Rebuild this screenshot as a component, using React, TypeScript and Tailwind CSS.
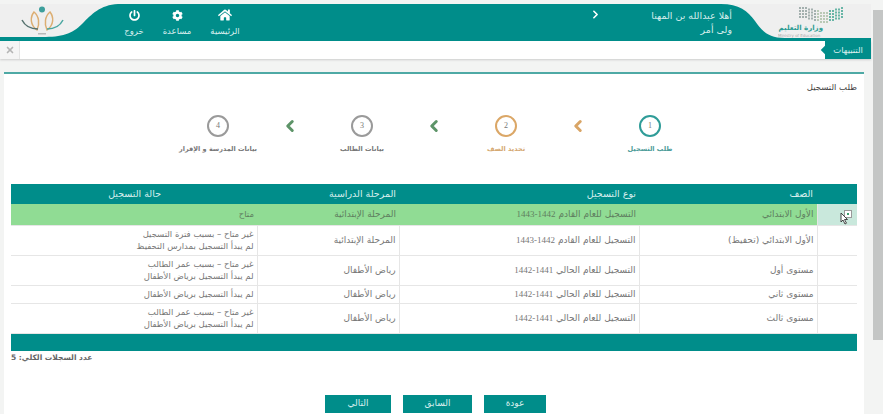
import type { ReactNode } from "react";
import { ChevronLeft, ChevronRight, X } from "lucide-react";
import { FaCog, FaHome, FaPowerOff } from "react-icons/fa";

const rows = [
  { grade: "الأول الابتدائي", type: "التسجيل للعام القادم", year: "1443-1442", stage: "المرحلة الإبتدائية", status: ["متاح"], active: true, h: "h-[21px]" },
  { grade: "الأول الابتدائي (تحفيظ)", type: "التسجيل للعام القادم", year: "1443-1442", stage: "المرحلة الإبتدائية", status: ["غير متاح – بسبب فترة التسجيل", "لم يبدأ التسجيل بمدارس التحفيظ"], h: "h-[30px]" },
  { grade: "مستوى أول", type: "التسجيل للعام الحالي", year: "1442-1441", stage: "رياض الأطفال", status: ["غير متاح – بسبب عمر الطالب", "لم يبدأ التسجيل برياض الأطفال"], h: "h-[30px]" },
  { grade: "مستوى ثاني", type: "التسجيل للعام الحالي", year: "1442-1441", stage: "رياض الأطفال", status: ["لم يبدأ التسجيل برياض الأطفال"], h: "h-[18px]" },
  { grade: "مستوى ثالث", type: "التسجيل للعام الحالي", year: "1442-1441", stage: "رياض الأطفال", status: ["غير متاح – بسبب عمر الطالب", "لم يبدأ التسجيل برياض الأطفال"], h: "h-[30px]" },
];

const steps = [
  { n: 1, label: "طلب التسجيل", ring: "border-[#2f9c98]", text: "text-[#4d9c99]", arrow: "text-[#d9a566]" },
  { n: 2, label: "تحديد الصف", ring: "border-[#dba767]", text: "text-[#d5a871]", arrow: "text-[#5d9468]" },
  { n: 3, label: "بيانات الطالب", ring: "border-[#9a9a9a]", text: "text-[#777]", arrow: "text-[#5d9468]" },
  { n: 4, label: "بيانات المدرسة و الإقرار", ring: "border-[#9a9a9a]", text: "text-[#777]", arrow: "" },
];

function MinistryLogo() {
  const dots = [];
  for (let c = 0; c < 15; c++) {
    for (let r = 0; r < 4; r++) {
      const d = Math.abs(c - 8);
      const sag = d < 2 ? 5 : d < 4 ? 3 : d < 6 ? 1.5 : 0;
      const fill = c < 6 ? "#a3b0ae" : c < 10 ? "#b9c9b5" : "#68b5a6";
      dots.push(<rect key={c + "-" + r} x={c * 3} y={r * 3 + sag} width="2" height="2" fill={fill} />);
    }
  }
  return (
    <svg width="45" height="17" viewBox="0 0 45 17">
      {dots}
    </svg>
  );
}

function NoorLogo() {
  return (
    <svg width="44" height="31" viewBox="0 0 44 31" fill="none">
      <circle cx="21" cy="3.500" r="3" fill="#3d9f9c" />
      <path d="M13 6c-4 5-4 13 3 18c3-6 2-14-3-18z" stroke="#dcae72" strokeWidth="1.500" />
      <path d="M29 6c4 5 4 13-3 18c-3-6-2-14 3-18z" stroke="#dcae72" strokeWidth="1.500" />
      <path d="M1 14c3 6 9 9 16 9" stroke="#55716e" strokeWidth="1.500" />
      <path d="M42 14c-3 6-9 9-16 9" stroke="#4aa6a0" strokeWidth="1.500" />
      <rect x="17" y="27" width="8" height="1.500" fill="#b9b9b9" />
    </svg>
  );
}

function NavItem({ label, icon, width }: { label: string; icon: ReactNode; width: string }) {
  return (
    <div className={"flex flex-col items-center text-white " + width}>
      <div className="flex h-[16px] items-center">{icon}</div>
      <span className="mt-[3px] text-[8.5px] leading-[10px] text-[#d8efee]">{label}</span>
    </div>
  );
}

export default function App() {
  return (
    <div dir="rtl" className="flex h-[414px] w-[883px] overflow-hidden bg-[#f3f4f3] font-['DejaVu_Sans',sans-serif] text-[#777]">
      <div className="flex w-[12px] shrink-0 flex-col items-start pt-[10px]">
        <div className="h-[330px] w-[10px] bg-[#c4c6c5]" />
      </div>
      <div className="w-[871px] shrink-0 pt-[4px]">
        <header className="relative flex h-[37px] items-start bg-[#008d8a]">
          <svg className="absolute right-0 top-0" width="150" height="35" viewBox="0 0 150 35">
            <path d="M150 0H0C18 0 27 7 34 17C41 27 47 34 64 34H150Z" fill="#efefef" />
          </svg>
          <svg className="absolute left-0 top-0" width="118" height="35" viewBox="0 0 118 35">
            <path d="M0 0H118C100 1 92 10 82 20C72 30 62 33 42 33L0 33Z" fill="#efefef" />
          </svg>
          <div className="relative h-[34px] w-[139px] shrink-0 pt-[3px]">
            <div className="mr-[27px] flex justify-start">
              <MinistryLogo />
            </div>
            <div className="mr-[48px] text-[7px] leading-[9px] font-bold text-[#2d9c93]">وزارة التعليم</div>
            <div dir="ltr" className="mr-[48px] w-[45px] overflow-hidden text-[4px] leading-[5px] whitespace-nowrap text-[#aaa]">
              Ministry of Education
            </div>
          </div>
          <div className="relative w-[130px] shrink-0 pt-[5px] text-[9.5px] leading-[14px] text-[#d6eeec]">
            <div>أهلا عبدالله بن المهنا</div>
            <div>ولى أمر</div>
          </div>
          <ChevronRight className="relative mt-[4px]" size={13} strokeWidth={3} color="#fff" />
          <div className="relative mr-[340px] flex pt-[3px]">
            <NavItem label="الرئيسية" width="w-[48px]" icon={<FaHome size={14} />} />
            <NavItem label="مساعدة" width="w-[48px]" icon={<FaCog size={11} />} />
            <NavItem label="خروج" width="w-[38px]" icon={<FaPowerOff size={11} />} />
          </div>
          <div className="relative mr-auto ml-[21px] mt-[2px]">
            <NoorLogo />
          </div>
        </header>

        <div className="flex h-[18px] items-stretch bg-white shadow-[0_1px_2px_#ccc]">
          <div className="relative flex w-[46px] items-center justify-center bg-[#008d8a] text-[8.5px] text-[#d8efee]">
            التنبيهات
            <span className="absolute -left-[3px] top-[6px] h-[6px] w-[6px] rotate-45 bg-[#008d8a]" />
          </div>
          <div className="flex-1" />
          <div className="flex w-[20px] items-center justify-center border-r border-[#e4e4e4] bg-[#f5f5f5]">
            <X size={10} strokeWidth={4} color="#b5b5b5" />
          </div>
        </div>

        <main className="mr-[7px] ml-[4px] mt-[13px] h-[345px] border-t-2 border-[#4ea9a5] bg-white">
          <h1 className="pr-[7px] pt-[7px] text-[8.5px] leading-[13px] text-[#444]">طلب التسجيل</h1>

          <div className="mt-[21px] flex justify-center">
            {steps.map((s) => (
              <div key={s.n} className="flex">
                <div className="flex w-[72px] flex-col items-center">
                  <div className={"flex h-[22px] w-[22px] items-center justify-center rounded-full border-2 font-['Liberation_Serif',serif] text-[8px] " + s.ring}>
                    {s.n}
                  </div>
                  <span className={"mt-[7px] whitespace-nowrap text-[6.5px] leading-[10px] font-bold " + s.text}>{s.label}</span>
                </div>
                {s.arrow && (
                  <div className="flex h-[22px] w-[72px] items-center justify-center">
                    <ChevronLeft className={s.arrow} size={18} strokeWidth={4} />
                  </div>
                )}
              </div>
            ))}
          </div>

          <div className="mr-[7px] ml-[7px] mt-[30px]">
            <table className="w-[846px] table-fixed border-collapse text-[9px] leading-[12px]">
              <thead>
                <tr className="h-[20px] bg-[#008d8a] text-[9.5px] text-[#d8efee]">
                  <th className="w-[40px]" />
                  <th className="w-[178px] pr-[4px] text-right font-normal">الصف</th>
                  <th className="w-[240px] pr-[3px] text-right font-normal">نوع التسجيل</th>
                  <th className="w-[142px] pr-[3px] text-right font-normal">المرحلة الدراسية</th>
                  <th className="w-[246px] pr-[96px] text-right font-normal">حالة التسجيل</th>
                </tr>
              </thead>
              <tbody>
                {rows.map((row) => (
                  <tr key={row.grade} className={row.h + " border-b border-[#e6e6e6] " + (row.active ? "bg-[#90dc94] text-[#5f7f60]" : "bg-white")}>
                    <td className={"border-l border-[#e6e6e6] " + (row.active ? "bg-[#c9e8dc]" : "")}>
                      {row.active && (
                        <div className="relative mr-[5px] flex h-[8px] w-[8px] items-center justify-center border border-[#999] bg-white">
                          <span className="h-[2px] w-[2px] bg-[#3d9f6c]" />
                          <svg className="absolute top-[1px] -left-[5px]" width="9" height="13" viewBox="0 0 9 13">
                            <path d="M1 1v9l2-2 2 4 1.500-.8-2-3.700h3z" fill="#fff" stroke="#333" strokeWidth="0.9" />
                          </svg>
                        </div>
                      )}
                    </td>
                    <td className={"pr-[3px] " + (row.active ? "" : "border-l border-[#e6e6e6]")}>{row.grade}</td>
                    <td className={"pr-[3px] " + (row.active ? "" : "border-l border-[#e6e6e6]")}>
                      {row.type} <span dir="ltr" className="font-['Liberation_Serif',serif]">{row.year}</span>
                    </td>
                    <td className={"pr-[3px] " + (row.active ? "" : "border-l border-[#e6e6e6]")}>{row.stage}</td>
                    <td className="pr-[3px] text-[8.5px]">
                      {row.status.map((line) => (
                        <div key={line}>{line}</div>
                      ))}
                    </td>
                  </tr>
                ))}
              </tbody>
              <tfoot>
                <tr className="h-[18px] bg-[#008d8a]">
                  <td colSpan={5} />
                </tr>
              </tfoot>
            </table>
            <p className="mt-[1px] text-left text-[7.5px] leading-[11px] font-bold text-[#666]">عدد السجلات الكلي: 5</p>
          </div>

          <div className="mt-[32px] mr-[318px] flex gap-[12px]">
            <button className="h-[18px] w-[62px] bg-[#008d8a] text-[9px] text-[#d8efee]">عودة</button>
            <button className="h-[18px] w-[69px] bg-[#008d8a] text-[9px] text-[#d8efee]">السابق</button>
            <button className="h-[18px] w-[66px] bg-[#008d8a] text-[9px] text-[#d8efee]">التالي</button>
          </div>
        </main>
      </div>
    </div>
  );
}
